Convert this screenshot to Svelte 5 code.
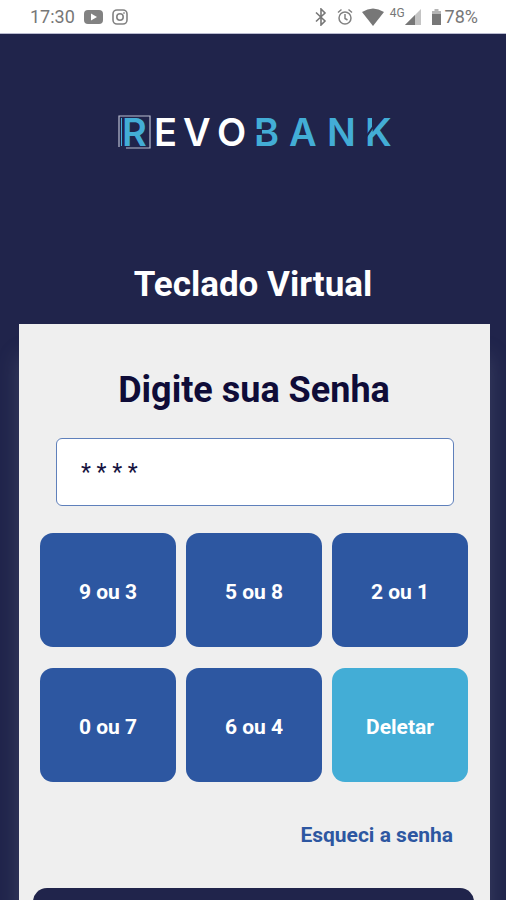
<script>
  const keys = ["9 ou 3", "5 ou 8", "2 ou 1", "0 ou 7", "6 ou 4"];

  let password = "* * * *";

  // Every key press adds one hidden digit
  const press = () => {
    password = password ? password + " *" : "*";
  };

  const erase = () => {
    password = password.slice(0, -2);
  };
</script>

<div class="screen">
  <div class="status">
    <div class="status-left">
      <span>17:30</span>
      <svg width="19" height="14" viewBox="0 0 19 14">
        <rect width="19" height="14" rx="4" fill="#828282" />
        <path d="M7 3.5 L13 7 L7 10.5 Z" fill="#fff" />
      </svg>
      <svg width="16" height="16" viewBox="0 0 16 16" fill="none" stroke="#828282" stroke-width="1.6">
        <rect x="1" y="1" width="14" height="14" rx="4" />
        <circle cx="8" cy="8" r="3.2" />
        <circle cx="12" cy="4" r="0.6" fill="#828282" stroke-width="0.6" />
      </svg>
    </div>
    <div class="status-right">
      <svg class="bluetooth" width="12" height="18" viewBox="0 0 12 18" fill="none" stroke="#777" stroke-width="1.6">
        <path d="M1 4.5 L10 13 L6 17 V1 L10 5 L1 13.5" />
      </svg>
      <svg class="alarm" width="16" height="18" viewBox="0 0 16 18" fill="none" stroke="#828282" stroke-width="1.5">
        <circle cx="8" cy="10" r="6" />
        <path d="M8 6 V10.500 L10.500 12 M1 4.500 L4.500 1.500 M15 4.500 L11.500 1.500" />
      </svg>
      <svg class="wifi" width="22" height="18" viewBox="0 0 22 18">
        <path d="M0 4 Q11 -3 22 4 L11 18 Z" fill="#777" />
      </svg>
      <span class="network">4G</span>
      <svg class="signal" width="16" height="16" viewBox="0 0 16 16">
        <path d="M0 16 L16 0 V16 Z" fill="#c4c4c4" />
        <path d="M0 16 L10 6 V16 Z" fill="#777" />
      </svg>
      <svg class="battery" width="9" height="16" viewBox="0 0 9 16">
        <path d="M2.500 0 H6.500 V2 H9 V16 H0 V2 H2.500 Z" fill="#b5b5b5" />
        <path d="M0 5 H9 V16 H0 Z" fill="#777" />
      </svg>
      <span>78%</span>
    </div>
  </div>

  <header>
    <svg class="logo" width="280" height="60" viewBox="0 0 280 60" role="img" aria-label="Revobank">
      <path d="M6 43 V12 H37 V44 H13" fill="none" stroke="#b9bdd0" stroke-width="1.2" />
      <path d="M8.500 14 V42" stroke="#43add6" stroke-width="1" />
      <text class="blue" x="9" y="42">R</text>
      <text class="white" x="41 70 104" y="42">EVO</text>
      <text class="blue" x="141 176 214 252" y="42">BANK</text>
      <path d="M140 25 H149 V31 H140 Z" fill="#20244b" />
      <path d="M260 12 V23 L253 33" fill="none" stroke="#20244b" stroke-width="2" />
    </svg>
    <h1>Teclado Virtual</h1>
  </header>

  <main class="card">
    <label for="password">Digite sua Senha</label>
    <input id="password" type="text" bind:value={password} readonly />

    <div class="keyboard">
      {#each keys as key}
        <button class="key" on:click={press}>{key}</button>
      {/each}
      <button class="key delete" on:click={erase}>Deletar</button>
    </div>

    <a class="forgot" href="#senha">Esqueci a senha</a>
    <button class="submit" aria-label="Entrar"></button>
  </main>
</div>

<style>
  :global(body) {
    margin: 0;
    background: #20244b;
  }

  .screen {
    height: 100vh;
    overflow: hidden;
    background: #20244b;
    font-family: Roboto, "Liberation Sans", sans-serif;
  }

  .status {
    display: flex;
    justify-content: space-between;
    box-sizing: border-box;
    height: 34px;
    padding: 0 28px 0 30px;
    border-bottom: 1px solid #b9bbd0;
    background: #fff;
    color: #777;
    font-size: 18px;
    line-height: 34px;
  }

  .status-left,
  .status-right {
    display: flex;
    align-items: center;
  }

  .status-left {
    gap: 9px;
  }

  .alarm {
    margin-left: 10px;
  }

  .wifi {
    margin-left: 9px;
  }

  .network {
    margin: 0 0 8px 6px;
    font-size: 12px;
    line-height: 16px;
  }

  .battery {
    margin: 0 4px 0 11px;
  }

  header {
    display: flex;
    flex-direction: column;
    align-items: center;
    padding-top: 70px;
    color: #fff;
  }

  .logo {
    overflow: visible;
    font-family: Inter, "Liberation Sans", sans-serif;
    font-size: 38px;
    font-weight: 600;
  }

  .logo .white {
    fill: #fff;
  }

  .logo .blue {
    fill: #43add6;
  }

  h1 {
    margin: 100px 0 18px;
    font-size: 35px;
    line-height: 42px;
  }

  .card {
    display: flex;
    flex-direction: column;
    margin: 0 16px 0 19px;
    padding: 44px 22px 0 21px;
    background: #efefef;
    box-shadow: 0 32px 20px rgba(120, 130, 150, 0.3);
  }

  label {
    color: #0f0c38;
    font-size: 36px;
    font-weight: 700;
    line-height: 44px;
    text-align: center;
  }

  input {
    box-sizing: border-box;
    height: 68px;
    margin: 26px 14px 27px 16px;
    padding: 0 24px;
    border: 1px solid #5f80bb;
    border-radius: 6px;
    outline: none;
    background: #fff;
    color: #17143f;
    font-family: inherit;
    font-size: 23px;
  }

  .keyboard {
    display: grid;
    grid-template-columns: repeat(3, 1fr);
    gap: 21px 10px;
  }

  .key {
    height: 114px;
    padding: 4px 0 0;
    border: 0;
    border-radius: 13px;
    background: #2d57a1;
    color: #fff;
    font-family: inherit;
    font-size: 21px;
    font-weight: 700;
  }

  .delete {
    background: #43add6;
  }

  .forgot {
    align-self: flex-end;
    margin: 40px 15px 40px 0;
    color: #2d57a1;
    font-size: 21px;
    font-weight: 700;
    line-height: 26px;
    text-decoration: none;
  }

  .submit {
    flex-shrink: 0;
    height: 80px;
    margin: 0 -6px 40px -7px;
    border: 0;
    border-radius: 14px;
    background: #20244b;
  }
</style>
